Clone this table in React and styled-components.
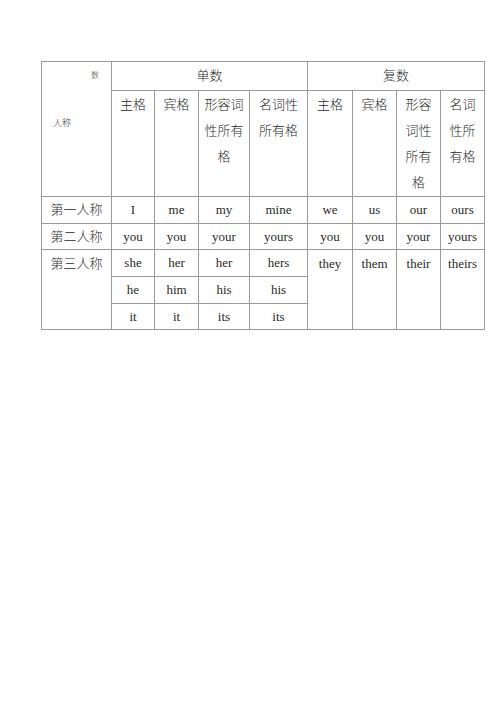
import styled, { createGlobalStyle } from 'styled-components';

const GlobalStyle = createGlobalStyle`
    html, body {
        margin: 0;
        padding: 0;
        background: #ffffff;
    }
    body {
        width: 500px;
        height: 708px;
        font-family: "Liberation Serif", "Noto Sans CJK SC", serif;
        color: #222222;
    }
`;

const Page = styled.div`
    padding: 61px 0 0 41px;
`;

const Table = styled.table`
    border-collapse: collapse;
    table-layout: fixed;
    width: 444px;
    font-size: 13px;
`;

const Row = styled.tr`
    height: ${(p) => p.$h}px;
`;

const Cell = styled.td`
    border: 1px solid #9a9a9a;
    padding: 0 4px;
    text-align: center;
    vertical-align: ${(p) => (p.$top ? 'top' : 'middle')};
    line-height: ${(p) => (p.$top ? '26px' : '16px')};
    padding-top: ${(p) => (p.$top ? '1px' : '0')};
    white-space: nowrap;
    font-weight: 300;
    color: #2a2a2a;
`;

const CornerCell = styled.td`
    border: 1px solid #9a9a9a;
    padding: 0;
    vertical-align: top;
`;

const Corner = styled.div`
    display: flex;
    flex-direction: column;
    height: 134px;
    font-size: 9px;
    font-weight: 300;
    color: #333;
`;

const CornerTop = styled.span`
    align-self: flex-end;
    font-size: 8px;
    margin: 7px 12px 0 0;
`;

const CornerBottom = styled.span`
    margin: 36px 0 0 11px;
`;

const singular = ['主格', '宾格', ['形容词', '性所有', '格'], ['名词性', '所有格']];
const plural = ['主格', '宾格', ['形容', '词性', '所有', '格'], ['名词', '性所', '有格']];

const Lines = ({ value }) =>
    Array.isArray(value)
        ? value.map((l, i) => (
              <span key={i}>
                  {l}
                  {i < value.length - 1 && <br />}
              </span>
          ))
        : value;

const widths = [70, 43, 44, 51, 58, 45, 44, 44, 44];

export default function App() {
    return (
        <>
            <GlobalStyle />
            <Page>
                <Table>
                    <colgroup>
                        {widths.map((w, i) => (
                            <col key={i} style={{ width: w }} />
                        ))}
                    </colgroup>
                    <tbody>
                        <Row $h={29}>
                            <CornerCell rowSpan={2}>
                                <Corner>
                                    <CornerTop>数</CornerTop>
                                    <CornerBottom>人称</CornerBottom>
                                </Corner>
                            </CornerCell>
                            <Cell colSpan={4}>单数</Cell>
                            <Cell colSpan={4}>复数</Cell>
                        </Row>
                        <Row $h={106}>
                            {[...singular, ...plural].map((h, i) => (
                                <Cell key={i} $top>
                                    <Lines value={h} />
                                </Cell>
                            ))}
                        </Row>
                        <Row $h={27}>
                            {['第一人称', 'I', 'me', 'my', 'mine', 'we', 'us', 'our', 'ours'].map((t, i) => (
                                <Cell key={i}>{t}</Cell>
                            ))}
                        </Row>
                        <Row $h={26}>
                            {['第二人称', 'you', 'you', 'your', 'yours', 'you', 'you', 'your', 'yours'].map((t, i) => (
                                <Cell key={i}>{t}</Cell>
                            ))}
                        </Row>
                        <Row $h={27}>
                            <Cell rowSpan={3} $top>第三人称</Cell>
                            {['she', 'her', 'her', 'hers'].map((t, i) => (
                                <Cell key={i}>{t}</Cell>
                            ))}
                            {['they', 'them', 'their', 'theirs'].map((t, i) => (
                                <Cell key={'p' + i} rowSpan={3} $top>{t}</Cell>
                            ))}
                        </Row>
                        <Row $h={27}>
                            {['he', 'him', 'his', 'his'].map((t, i) => (
                                <Cell key={i}>{t}</Cell>
                            ))}
                        </Row>
                        <Row $h={26}>
                            {['it', 'it', 'its', 'its'].map((t, i) => (
                                <Cell key={i}>{t}</Cell>
                            ))}
                        </Row>
                    </tbody>
                </Table>
            </Page>
        </>
    );
}
